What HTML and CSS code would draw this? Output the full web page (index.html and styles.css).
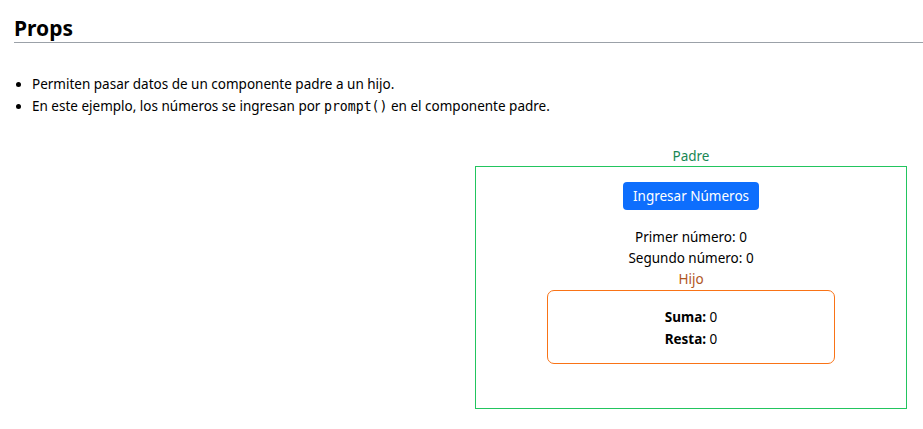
FILE: index.html
```html
<!DOCTYPE html>
<html lang="es">
<head>
<meta charset="utf-8">
<title>Props</title>
<link rel="stylesheet" href="styles.css">
</head>
<body>
<h2 class="title">Props</h2>
<ul class="notes">
  <li>Permiten pasar datos de un componente padre a un hijo.</li>
  <li>En este ejemplo, los números se ingresan por <code>prompt()</code> en el componente padre.</li>
</ul>
<div class="demo">
  <div class="parent-wrap">
    <div class="label label-parent">Padre</div>
    <div class="parent">
      <button class="btn">Ingresar Números</button>
      <p class="line first">Primer número: 0</p>
      <p class="line">Segundo número: 0</p>
      <div class="label label-child">Hijo</div>
      <div class="child">
        <p class="line"><strong>Suma:</strong> 0</p>
        <p class="line"><strong>Resta:</strong> 0</p>
      </div>
    </div>
  </div>
</div>
</body>
</html>
```
FILE: styles.css
```css
html, body {
  margin: 0;
  padding: 0;
}
body {
  font-family: "Noto Sans", "Open Sans", sans-serif;
  font-size: 13.5px;
  color: #000;
  background: #fff;
  padding-left: 14px;
}
.title {
  margin: 0;
  padding-top: 14px;
  font-size: 21px;
  font-weight: 700;
  line-height: 28px;
  border-bottom: 1px solid #9ba1a8;
}
.notes {
  margin: 30px 0 0 0;
  padding-left: 18px;
}
.notes li {
  line-height: 22px;
}
code {
  font-family: "DejaVu Sans Mono", "Liberation Mono", monospace;
  font-size: 13.2px;
}
.demo {
  display: flex;
  justify-content: flex-end;
  padding-right: 16px;
  margin-top: 28px;
}
.parent-wrap {
  width: 432px;
}
.label {
  text-align: center;
  line-height: 20px;
}
.label-parent {
  color: #198754;
}
.label-child {
  color: #b0561f;
}
.parent {
  border: 1px solid #22c55e;
  display: flex;
  flex-direction: column;
  align-items: center;
  padding: 15px 0 44px 0;
}
.btn {
  font-family: inherit;
  font-size: 13.5px;
  background: #0d6efd;
  color: #fff;
  border: none;
  border-radius: 4px;
  height: 28px;
  padding: 0 10px;
}
.line {
  margin: 0;
  line-height: 21px;
}
.first {
  margin-top: 17px;
}
.child {
  width: 286px;
  border: 1px solid #f97316;
  border-radius: 7px;
  margin-top: 1px;
  padding: 15px 0 13px 0;
  display: flex;
  flex-direction: column;
  align-items: center;
}
.child .line {
  line-height: 22px;
}
```
